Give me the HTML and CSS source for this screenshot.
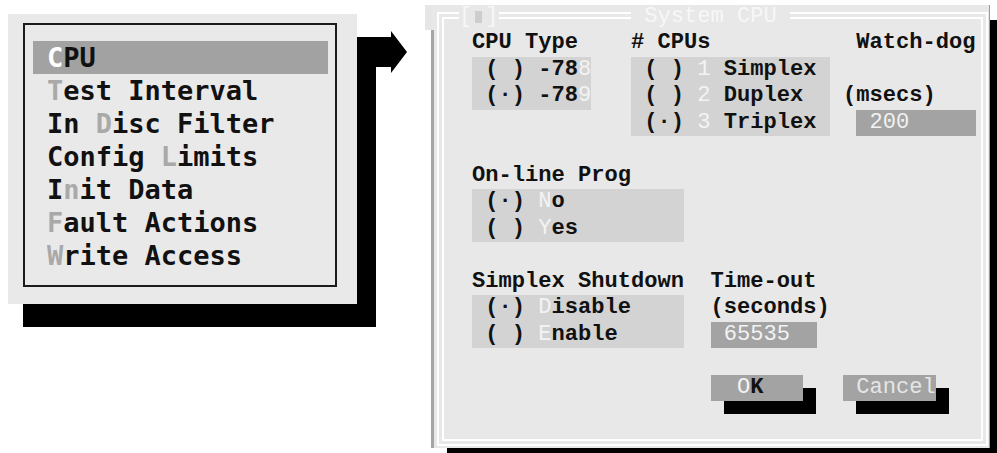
FILE: index.html
```html
<!DOCTYPE html>
<html lang="en">
<head>
  <meta charset="UTF-8" />
  <title>System CPU</title>
  <link rel="stylesheet" href="styles.css">
</head>
<body>
  <div class="screen">
    <div class="menu">
      <ul class="menu-list">
        <li class="menu-item is-active"><span class="key">C</span>PU</li>
        <li class="menu-item"><span class="key">T</span>est Interval</li>
        <li class="menu-item">In <span class="key">D</span>isc Filter</li>
        <li class="menu-item">Config <span class="key">L</span>imits</li>
        <li class="menu-item">I<span class="key">n</span>it Data</li>
        <li class="menu-item"><span class="key">F</span>ault Actions</li>
        <li class="menu-item"><span class="key">W</span>rite Access</li>
      </ul>
    </div>

    <svg class="pointer" width="50" height="46" viewBox="0 0 50 46">
      <polygon points="0,9 34,9 34,3 50,24 34,45 34,39 0,39" fill="#000"/>
    </svg>

    <div class="dialog">
      <div class="frame">
        <span class="close">[<i></i>]</span>
        <span class="title"> System CPU </span>
        <div class="frame-inner">
          <div class="form">
            <div class="cpu-type-label">CPU Type</div>
            <div class="group cpu-type">
              <div> ( ) -78<span class="hot">8</span></div>
              <div> (·) -78<span class="hot">9</span></div>
            </div>

            <div class="cpus-label"># CPUs</div>
            <div class="group cpus">
              <div> ( ) <span class="hot">1</span> Simplex</div>
              <div> ( ) <span class="hot">2</span> Duplex</div>
              <div> (·) <span class="hot">3</span> Triplex</div>
            </div>

            <div class="watchdog-label">Watch-dog</div>
            <div class="watchdog-unit">(msecs)</div>
            <div class="field watchdog-input"> 200</div>

            <div class="online-label">On-line Prog</div>
            <div class="group online">
              <div> (·) <span class="hot">N</span>o</div>
              <div> ( ) <span class="hot">Y</span>es</div>
            </div>

            <div class="shutdown-label">Simplex Shutdown</div>
            <div class="group shutdown">
              <div> (·) <span class="hot">D</span>isable</div>
              <div> ( ) <span class="hot">E</span>nable</div>
            </div>

            <div class="timeout-label">Time-out</div>
            <div class="timeout-unit">(seconds)</div>
            <div class="field timeout-input"> 65535</div>

            <div class="button btn-ok">  <span class="hot">O</span>K</div>
            <div class="button btn-cancel"> Cancel</div>
          </div>
        </div>
      </div>
    </div>
  </div>
</body>
</html>
```

FILE: styles.css
```css
body {
  margin: 0;
  background: #fff;
  font-family: "Liberation Mono", monospace;
}
.screen {
  display: flex;
  align-items: flex-start;
  width: 997px;
  height: 453px;
  overflow: hidden;
}

/* left pull-down menu */
.menu {
  flex: none;
  box-sizing: border-box;
  width: 349px;
  height: 290px;
  margin: 14px 0 0 8px;
  padding: 9px 20px 17px 15px;
  background: #e9e9e9;
  box-shadow: 15px 23px 0 #000, 19px 23px 0 #000;
}
.menu-list {
  list-style: none;
  margin: 0;
  height: 100%;
  box-sizing: border-box;
  border: 2px solid #1c1c1c;
  padding: 16px 0 0 8px;
  font: bold 27px/33px "DejaVu Sans Mono", monospace;
}
.menu-item {
  box-sizing: border-box;
  width: 295px;
  height: 33px;
  padding-left: 14px;
  white-space: pre;
  color: #111;
}
.menu-item .key {
  color: #a9a9a9;
}
.menu-item.is-active {
  background: #a2a2a2;
}
.is-active .key {
  color: #fff;
}
.pointer {
  flex: none;
  margin-top: 28px;
}

/* dialog window */
.dialog {
  flex: none;
  position: relative;
  display: flex;
  width: 557px;
  height: 443px;
  margin: 5px 0 0 25px;
  background: #e8e8e8;
  border-right: 1px solid #9c9c9c;
  box-shadow: 15px 15px 0 #000;
}
.dialog::before {
  content: "";
  position: absolute;
  left: -7px;
  top: 0;
  width: 7px;
  height: 25px;
  background: #e6e6e6;
}
.dialog::after {
  content: "";
  position: absolute;
  left: -1px;
  top: 25px;
  bottom: 0;
  width: 3px;
  background: #a5a5a5;
}
.frame {
  flex: 1;
  display: flex;
  position: relative;
  margin: 7px 1px 2px 5px;
  border: 2px solid #fff;
  padding: 3px;
}
.frame-inner {
  flex: 1;
  border: 2px solid #fff;
  padding: 11px 0 0 28px;
}
.close, .title {
  position: absolute;
  top: -7px;
  height: 20px;
  font-size: 22.08px;
  line-height: 20px;
  white-space: pre;
  background: #e8e8e8;
  color: #f7f7f7;
}
.close {
  left: 20px;
}
.close i {
  display: inline-block;
  width: 7px;
  height: 12px;
  margin: 0 3px;
  vertical-align: -1px;
  background: #cdcdcd;
}
.title {
  left: 192px;
}

/* character grid inside the dialog */
.form {
  display: grid;
  grid-template-columns: repeat(38, 13.25px);
  grid-template-rows: repeat(15, 26.5px);
  font: bold 22.08px/26.5px "Liberation Mono", monospace;
  color: #111;
}
.form > div:not(.group),
.group > div {
  white-space: pre;
}
.group {
  background: #d3d3d3;
}
.hot {
  color: #f3f3f3;
  font-weight: 400;
}
.field {
  background: #a3a3a3;
  color: #f2f2f2;
  font-weight: 400;
}
.button {
  background: #a3a3a3;
  box-shadow: 13px 13px 0 #000;
}
.btn-cancel {
  color: #e6e6e6;
  font-weight: 400;
}

.cpu-type-label { grid-area: 1 / 1 / 2 / 10; }
.cpu-type { grid-area: 2 / 1 / 4 / 10; }
.cpus-label { grid-area: 1 / 13 / 2 / 28; }
.cpus { grid-area: 2 / 13 / 5 / 28; }
.watchdog-label { grid-area: 1 / 30 / 2 / 39; }
.watchdog-unit { grid-area: 3 / 29 / 4 / 39; }
.watchdog-input { grid-area: 4 / 30 / 5 / 39; }
.online-label { grid-area: 6 / 1 / 7 / 17; }
.online { grid-area: 7 / 1 / 9 / 17; }
.shutdown-label { grid-area: 10 / 1 / 11 / 17; }
.shutdown { grid-area: 11 / 1 / 13 / 17; }
.timeout-label { grid-area: 10 / 19 / 11 / 27; }
.timeout-unit { grid-area: 11 / 19 / 12 / 29; }
.timeout-input { grid-area: 12 / 19 / 13 / 27; }
.btn-ok { grid-area: 14 / 19 / 15 / 26; }
.btn-cancel { grid-area: 14 / 29 / 15 / 36; }
```
